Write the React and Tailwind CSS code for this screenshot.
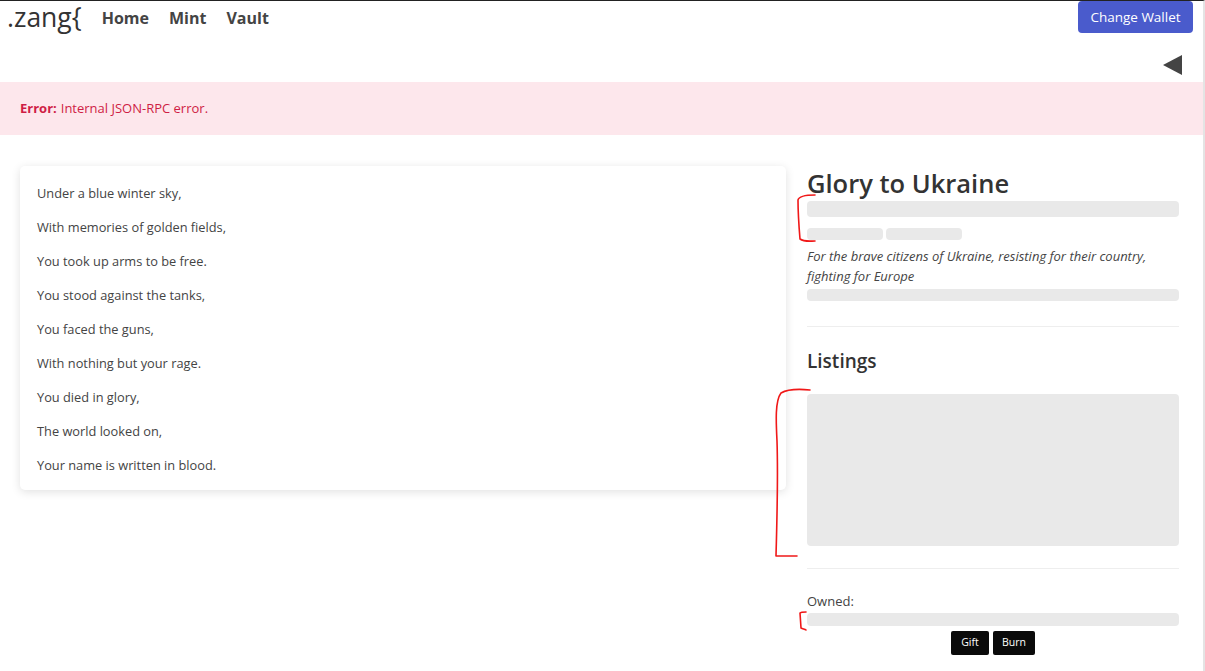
const poem = [
  "Under a blue winter sky,",
  "With memories of golden fields,",
  "You took up arms to be free.",
  "You stood against the tanks,",
  "You faced the guns,",
  "With nothing but your rage.",
  "You died in glory,",
  "The world looked on,",
  "Your name is written in blood.",
];

function Skeleton({ className }) {
  return <div className={"rounded-[4px] bg-[#e9e9e9] " + className} />;
}

export default function App() {
  return (
    <div
      className="relative w-[1205px] h-[671px] overflow-hidden bg-white border-t border-[#222] border-r-2 border-r-[#e4e4e4] text-[#333]"
      style={{ fontFamily: '"Open Sans", "Noto Sans", sans-serif' }}
    >
      {/* navbar */}
      <nav className="flex items-start justify-between pl-[7px] pr-[10px]">
        <div className="flex items-center gap-[20px] h-[33px]">
          <span className="text-[26.5px] text-[#333] leading-none">.zang{"{"}</span>
          <div className="flex items-center gap-[20px] text-[16px] font-bold text-[#444]">
            <a>Home</a>
            <a>Mint</a>
            <a>Vault</a>
          </div>
        </div>
        <button className="h-[32px] w-[115px] rounded-[4px] bg-[#4a5bcc] text-white text-[13.5px]">
          Change Wallet
        </button>
      </nav>

      <div className="flex justify-end pr-[21px] mt-[21px] h-[27px]">
        <svg width="19" height="20" viewBox="0 0 19 20">
          <polygon points="19,0 19,20 0,10" fill="#444" />
        </svg>
      </div>

      {/* error banner */}
      <div className="h-[53px] bg-[#fde7ec] flex items-center px-[20px] text-[13px] text-[#cf1d45]">
        <span className="font-bold mr-[4px]">Error:</span>
        <span>Internal JSON-RPC error.</span>
      </div>

      {/* main */}
      <div className="flex items-start gap-[21px] pl-[20px] mt-[31px]">
        <div className="w-[766px] rounded-[5px] bg-white shadow-[0_2px_10px_rgba(0,0,0,0.12)] px-[17px] pt-[17px] pb-[15px] text-[12.8px] text-[#444]">
          {poem.map((line, i) => (
            <p key={i} className={"leading-[20px] " + (i < poem.length - 1 ? "mb-[14px]" : "")}>
              {line}
            </p>
          ))}
        </div>

        <div className="w-[372px] flex flex-col">
          <h1 className="text-[25.5px] font-semibold leading-[34px] text-[#333]">Glory to Ukraine</h1>
          <Skeleton className="h-[16px] mt-[1px]" />
          <div className="flex gap-[3px] mt-[11px]">
            <Skeleton className="h-[12px] w-[76px]" />
            <Skeleton className="h-[12px] w-[76px]" />
          </div>
          <p className="italic text-[13px] leading-[20px] mt-[6px] text-[#444]">
            For the brave citizens of Ukraine, resisting for their country, fighting for Europe
          </p>
          <Skeleton className="h-[12px] mt-[3px]" />
          <hr className="mt-[25px] border-t border-[#eee]" />
          <h2 className="text-[19px] font-semibold leading-[30px] mt-[19px] text-[#333]">Listings</h2>
          <Skeleton className="h-[152px] mt-[18px]" />
          <hr className="mt-[22px] border-t border-[#eee]" />
          <p className="text-[13px] leading-[18px] mt-[23px] text-[#444]">Owned:</p>
          <Skeleton className="h-[13px] mt-[3px]" />
          <div className="flex justify-center gap-[4px] mt-[5px]">
            <button className="h-[24px] w-[38px] rounded-[2px] bg-[#0a0a0a] text-white text-[10.5px]">Gift</button>
            <button className="h-[24px] w-[42px] rounded-[2px] bg-[#0a0a0a] text-white text-[10.5px]">Burn</button>
          </div>
        </div>
      </div>

      {/* red annotation marks */}
      <svg className="absolute left-0 top-0 pointer-events-none" width="1205" height="671">
        <g fill="none" stroke="#f01818" strokeWidth="1.6" strokeLinecap="round" strokeLinejoin="round">
          <path d="M815 194 C806 194 799 195 798 199 C798 210 799 226 800 238 C804 241 810 240 815 240" />
          <path d="M810 389 C800 388 788 388 781 392 C775 400 776 420 777 440 C778 470 777 520 776 555 L797 555" />
          <path d="M806 611 C803 611 801 611 800 612 L801 627 C803 628 805 628 806 629" />
        </g>
      </svg>
    </div>
  );
}
